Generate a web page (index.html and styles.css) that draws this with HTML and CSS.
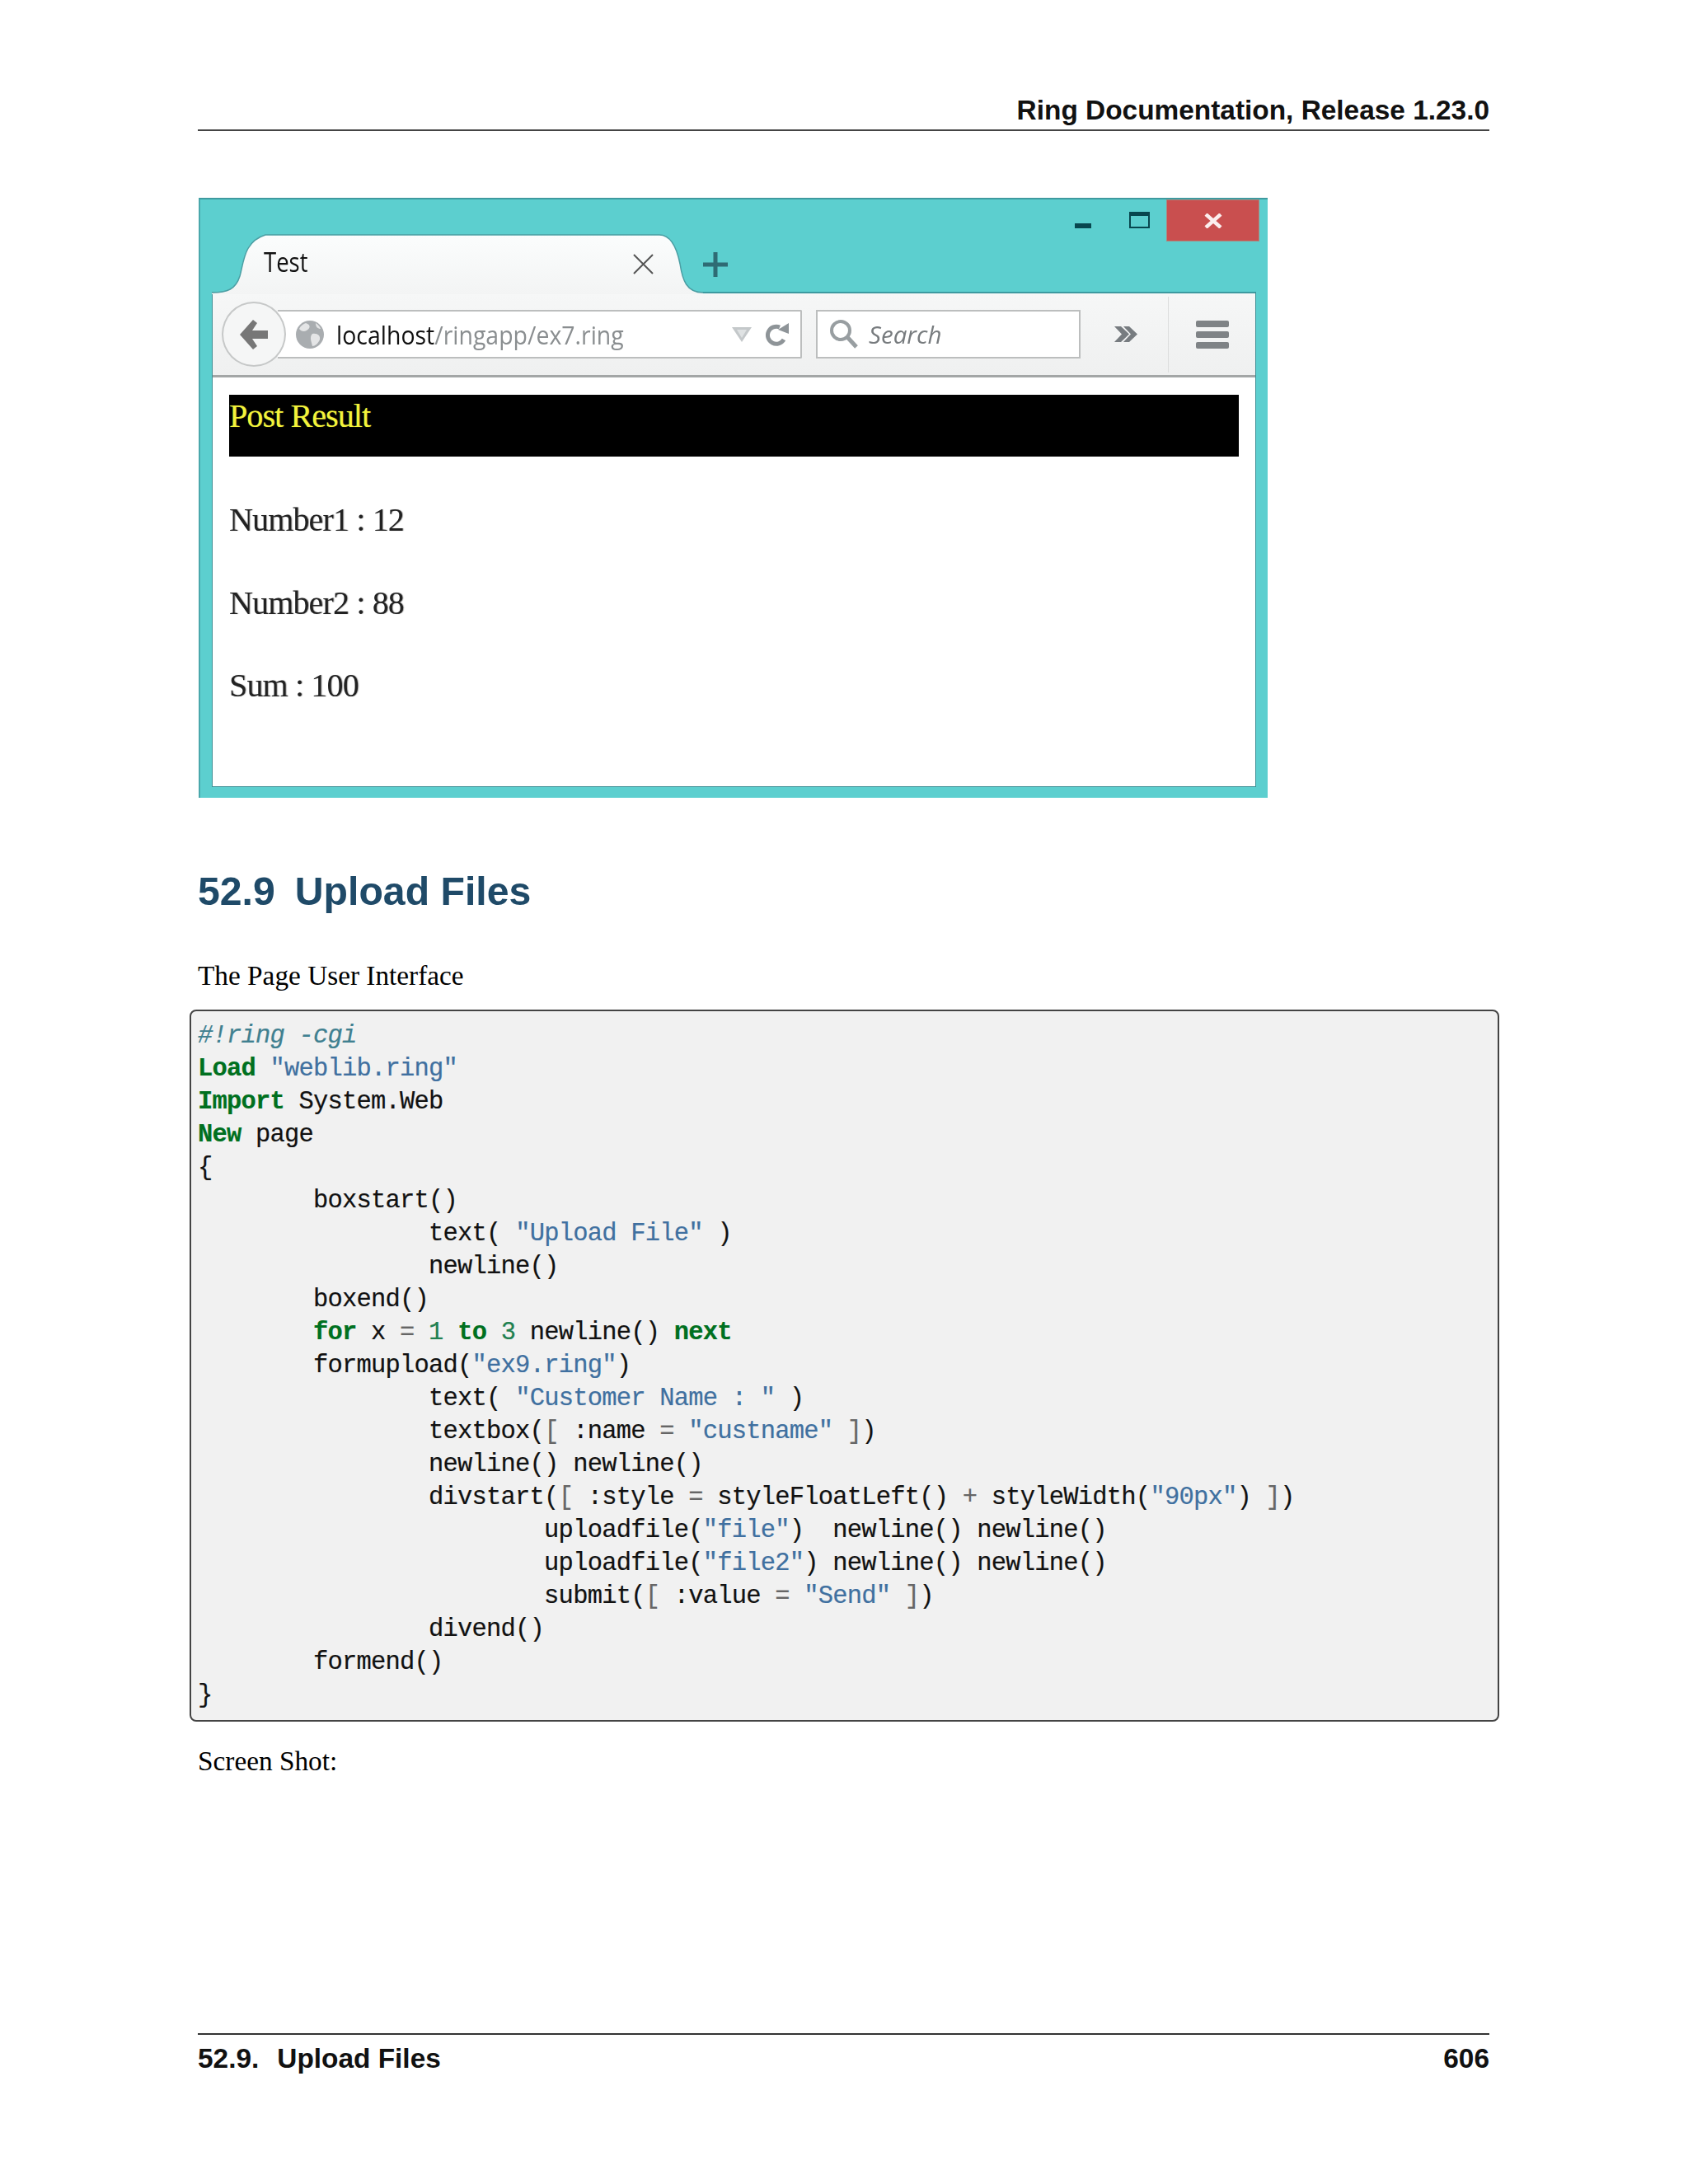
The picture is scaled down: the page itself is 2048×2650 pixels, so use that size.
FILE: index.html
```html
<!DOCTYPE html>
<html lang="en">
<head>
<meta charset="utf-8">
<title>Ring Documentation</title>
<link rel="stylesheet" href="styles.css">
</head>
<body>
<div class="page">
  <header class="doc-head">Ring Documentation, Release 1.23.0</header>

  <figure class="shot">
    <div class="strip">
      <div class="tab">
        <svg class="tab-bg" width="600" height="73" viewBox="0 0 600 73"><defs><linearGradient id="tg" x1="0" y1="0" x2="0" y2="1"><stop offset="0" stop-color="#fbfdfd"/><stop offset="1" stop-color="#f3f4f4"/></linearGradient></defs><path d="M0 71C19 71 29 67 34 51C39 33 39 9 65 1L543 1C559 1 565 21 568 36C571 56 576 71 596 71L596 73L0 73Z" fill="url(#tg)"/><path d="M0 71C19 71 29 67 34 51C39 33 39 9 65 1L543 1C559 1 565 21 568 36C571 56 576 71 596 71" fill="none" stroke="#4b9ea3" stroke-width="1.500"/></svg>
        <span class="tab-title">Test</span>
        <svg class="tab-x" width="25" height="25" viewBox="0 0 25 25"><path d="M1 1L24 24M24 1L1 24" stroke="#555" stroke-width="2" fill="none"/></svg>
      </div>
      <svg class="plus" width="30" height="30" viewBox="0 0 30 30"><path d="M15 0V30M0 15H30" stroke="#2f6b74" stroke-width="5" fill="none"/></svg>
      <div class="controls">
        <span class="min"></span>
        <span class="max"></span>
        <span class="close"><svg width="22" height="18" viewBox="0 0 22 18"><path d="M2 1L20 17M20 1L2 17" stroke="#fbeeee" stroke-width="4.500" fill="none"/></svg></span>
      </div>
    </div>
    <div class="win">
      <div class="toolbar">
        <span class="back"><svg width="36" height="38" viewBox="0 0 36 38"><path d="M17 1L1 19L17 37L22 33L16 24H35V14H16L22 5Z" fill="#777"/></svg></span>
        <div class="url">
          <svg class="globe" width="34" height="34" viewBox="0 0 34 34"><circle cx="17" cy="17" r="17" fill="#a9adb0"/><path d="M12 3C19 5 17 10 13 12C10 14 6 13 4 10C6 6 9 4 12 3ZM20 16C26 15 30 18 29 23C27 28 23 31 20 31C19 26 16 20 20 16ZM24 3C27 5 29 7 30 10C27 10 24 8 24 3Z" fill="#e4e5e6"/></svg>
          <span class="addr"><span class="host">localhost</span>/ringapp/ex7.ring</span>
          <svg class="drop" width="24" height="18" viewBox="0 0 24 18"><path d="M0 0H24L12 18Z" fill="#c4c8ca"/><path d="M6 3H18L12 13Z" fill="#dfe2e3"/></svg>
          <svg class="reload" width="28" height="28" viewBox="0 0 28 28"><path d="M22 20A10.500 10.500 0 1 1 17 5" stroke="#8e9498" stroke-width="5" fill="none"/><path d="M15 8L28 0L28 13Z" fill="#8e9498"/></svg>
        </div>
        <div class="search">
          <svg class="lens" width="35" height="35" viewBox="0 0 35 35"><circle cx="14" cy="13" r="11" stroke="#989ea1" stroke-width="4" fill="#fff"/><path d="M22 21L33 33" stroke="#989ea1" stroke-width="5" fill="none"/></svg>
          <span class="search-text">Search</span>
        </div>
        <svg class="more" width="30" height="21" viewBox="0 0 30 21"><path d="M1 1H9L19 10.500L9 20H1L10 10.500ZM12 1H19L29 10.500L19 20H12L21 10.500Z" fill="#777c80"/></svg>
        <span class="sep"></span>
        <div class="burger"><span></span><span></span><span></span></div>
      </div>
      <div class="content">
        <div class="banner">Post Result</div>
        <p class="row">Number1 : 12</p>
        <p class="row">Number2 : 88</p>
        <p class="row">Sum : 100</p>
      </div>
    </div>
  </figure>

  <h2 class="section">52.9<span class="gap"></span>Upload Files</h2>
  <p class="body first">The Page User Interface</p>

<pre class="code"><span class="c">#!ring -cgi</span>
<span class="k">Load</span> <span class="s">"weblib.ring"</span>
<span class="k">Import</span> System.Web
<span class="k">New</span> page
{
        boxstart()
                text( <span class="s">"Upload File"</span> )
                newline()
        boxend()
        <span class="k">for</span> x <span class="o">=</span> <span class="n">1</span> <span class="k">to</span> <span class="n">3</span> newline() <span class="k">next</span>
        formupload(<span class="s">"ex9.ring"</span>)
                text( <span class="s">"Customer Name : "</span> )
                textbox(<span class="o">[</span> :name <span class="o">=</span> <span class="s">"custname"</span> <span class="o">]</span>)
                newline() newline()
                divstart(<span class="o">[</span> :style <span class="o">=</span> styleFloatLeft() <span class="o">+</span> styleWidth(<span class="s">"90px"</span>) <span class="o">]</span>)
                        uploadfile(<span class="s">"file"</span>)  newline() newline()
                        uploadfile(<span class="s">"file2"</span>) newline() newline()
                        submit(<span class="o">[</span> :value <span class="o">=</span> <span class="s">"Send"</span> <span class="o">]</span>)
                divend()
        formend()
}</pre>

  <p class="body shot-label">Screen Shot:</p>

  <footer class="doc-foot"><span>52.9.<span class="gap small"></span>Upload Files</span><span>606</span></footer>
</div>
</body>
</html>
```
FILE: styles.css
```css
html, body { margin: 0; padding: 0; background: #fff; }
.page { width: 1567px; height: 2650px; margin-left: 240px; position: relative; font-family: "Liberation Serif", serif; color: #000; box-sizing: border-box; padding-top: 112px; }
.doc-head { font: bold 33.400px/44px "Liberation Sans", sans-serif; text-align: right; border-bottom: 2px solid #444; height: 45px; color: #111; }
.shot { margin: 81px 0 0 1px; width: 1297px; height: 728px; box-sizing: border-box; background: #5ccfcf; border-top: 2px solid #3f9a9f; border-left: 2px solid #4aa8ac; padding: 0 14px 13px 14px; display: flex; flex-direction: column; }
.strip { height: 112px; display: flex; align-items: flex-end; position: relative; }
.tab { width: 593px; height: 70px; position: relative; display: flex; align-items: flex-start; z-index: 2; }
.tab-bg { position: absolute; left: 0; top: 0; }
.tab-title { position: relative; margin: 14px 0 0 63px; font: 32px/40px "Open Sans", sans-serif; color: #111; transform: scaleX(.86); transform-origin: left; }
.tab-x { position: absolute; left: 511px; top: 24px; }
.plus { margin: 0 0 18px 3px; z-index: 2; }
.controls { margin-left: auto; align-self: flex-start; display: flex; align-items: flex-start; }
.min { width: 20px; height: 6px; background: #08474f; margin: 29px 46px 0 0; }
.max { width: 25px; height: 20px; box-sizing: border-box; border: 2px solid #08474f; border-top-width: 5px; margin: 15px 20px 0 0; }
.close { width: 113px; height: 51px; background: #c94f4f; border: 1px solid #a98a80; box-sizing: border-box; display: flex; align-items: center; justify-content: center; margin-right: -4px; }
.win { flex: 1; display: flex; flex-direction: column; background: #fff; border: 1px solid #3d8f95; border-top: 2px solid #3d9aa0; }
.toolbar { height: 99px; flex: none; background: linear-gradient(#f6f7f7, #eff0f0); border-bottom: 3px solid #a3a6a6; display: flex; align-items: center; padding: 0 0 0 11px; position: relative; }
.back { width: 78px; height: 79px; box-sizing: border-box; border: 2px solid #c6c8c8; border-radius: 50%; background: #f5f6f6; display: flex; align-items: center; justify-content: center; z-index: 2; flex: none; }
.url { margin-left: -10px; width: 636px; height: 59px; box-sizing: border-box; background: #fff; border: 2px solid #bcbebe; border-left: 0; border-radius: 0 2px 2px 0; display: flex; align-items: center; padding-left: 22px; flex: none; }
.addr { margin-left: 15px; width: 348px; white-space: nowrap; font: 31px/40px "Open Sans", sans-serif; color: #8a8e90; display: inline-block; transform: scaleX(.918); transform-origin: left; }
.host { color: #111; }
.drop { margin-left: 132px; }
.reload { margin-left: 17px; }
.search { margin: 0 0 0 17px; width: 321px; height: 59px; box-sizing: border-box; background: #fff; border: 2px solid #bcbebe; display: flex; align-items: center; padding-left: 14px; flex: none; }
.lens { flex: none; }
.search-text { margin-left: 13px; font: italic 29px/40px "Open Sans", sans-serif; color: #777b7e; transform: scaleX(1.02); transform-origin: left; }
.more { margin-left: 40px; flex: none; }
.sep { width: 1px; height: 92px; background: #dcdddd; margin-left: 36px; flex: none; }
.burger { margin-left: 33px; width: 40px; display: flex; flex-direction: column; gap: 5px; }
.burger span { height: 8px; background: #7f8386; border-radius: 2px; }
.content { flex: 1; padding: 21px 20px 0 20px; }
.banner { height: 75px; background: #000; color: #f4f43a; font: 40px/36px "Liberation Serif", serif; letter-spacing: -.9px; padding-top: 8px; box-sizing: border-box; text-shadow: .5px 0 1px rgba(255,255,80,.5); }
.row { margin: 56.500px 0 0; font: 40px/44px "Liberation Serif", serif; letter-spacing: -.85px; color: #222; filter: blur(.4px); text-shadow: 1px 0 1px rgba(0,0,0,.35); }
.banner + .row { margin-top: 55px; }
.section { margin: 83px 0 0; font: bold 48.200px/60px "Liberation Sans", sans-serif; color: #1f4a68; display: flex; }
.gap { display: inline-block; width: 24px; }
.gap.small { width: 22px; }
.body { margin: 0; font: 33.300px/44px "Liberation Serif", serif; }
.first { margin-top: 51px; }
.code { margin: 19px 0 0 -10px; width: 1589px; height: 864px; box-sizing: border-box; background: #f1f1f1; border: 2px solid #444; border-radius: 8px; padding: 10px 8px; font: 30.500px/40px "Liberation Mono", monospace; letter-spacing: -.798px; color: #111; -webkit-text-stroke: .2px; }
.k { color: #007020; font-weight: bold; }
.s { color: #4070a0; }
.c { color: #408090; font-style: italic; }
.o { color: #666; }
.n { color: #208050; }
.shot-label { margin-top: 26px; }
.doc-foot { position: absolute; left: 0; right: 0; top: 2467px; border-top: 2px solid #333; display: flex; justify-content: space-between; font: bold 33.400px/44px "Liberation Sans", sans-serif; color: #111; padding-top: 7px; }
```
